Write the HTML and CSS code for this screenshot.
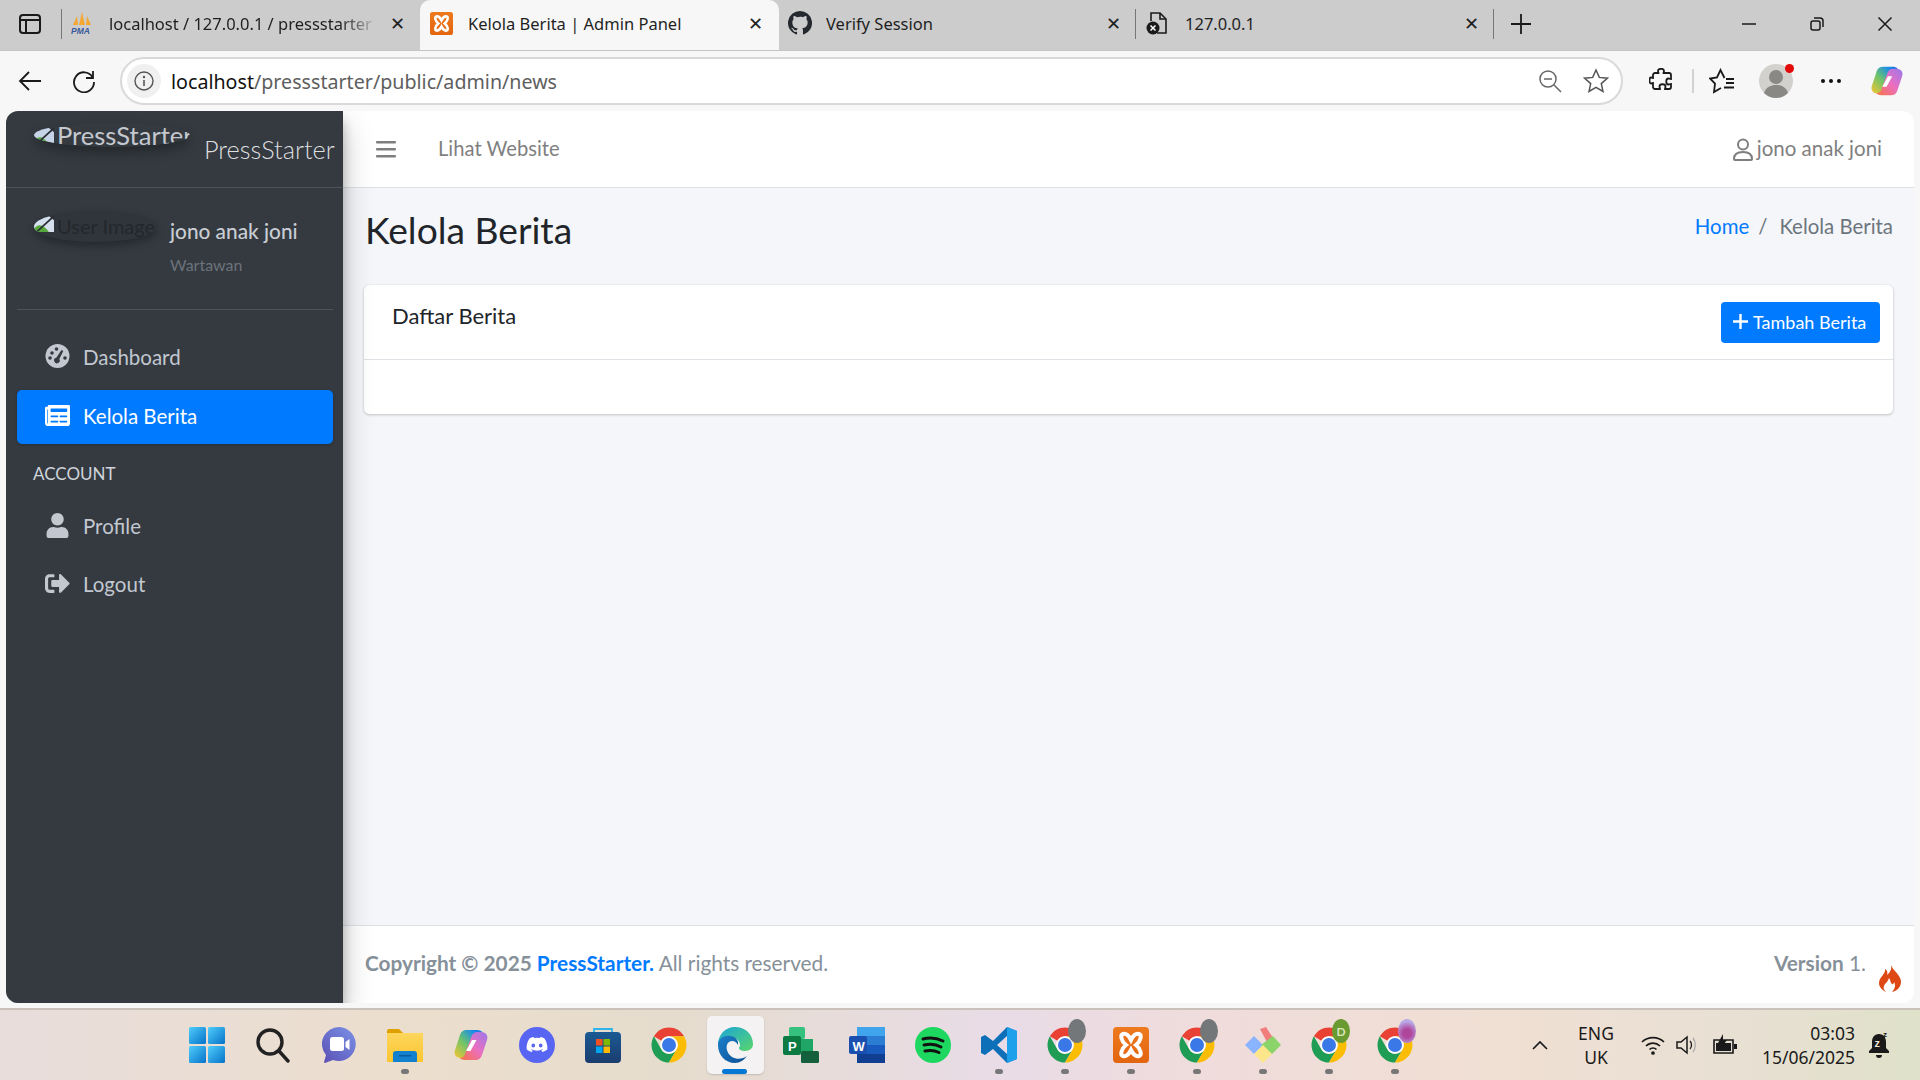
FILE: index.html
```html
<!DOCTYPE html>
<html lang="en">
<head>
    <meta charset="UTF-8">
    <meta name="viewport" content="width=device-width, initial-scale=1.0">
    <title>Kelola Berita | Admin Panel</title>
    <link rel="stylesheet" href="styles.css">
</head>
<body>
    <!-- shared icons -->
    <svg class="icon-defs" aria-hidden="true">
        <defs>
            <linearGradient id="gStart" x1="0" y1="0" x2="1" y2="1"><stop offset="0" stop-color="#4fcdfb"/><stop offset="1" stop-color="#0672c9"/></linearGradient>
            <linearGradient id="gMeet" x1="0" y1="1" x2="1" y2="0"><stop offset="0" stop-color="#5b4fb5"/><stop offset="1" stop-color="#7b93e6"/></linearGradient>
            <linearGradient id="gFolder" x1="0" y1="0" x2="0" y2="1"><stop offset="0" stop-color="#fdd65c"/><stop offset="1" stop-color="#fbc52f"/></linearGradient>
            <linearGradient id="gCopL" x1="0" y1="1" x2="1" y2="0"><stop offset="0" stop-color="#f7c62f"/><stop offset=".45" stop-color="#6cc36b"/><stop offset=".8" stop-color="#1b8fe8"/><stop offset="1" stop-color="#1667d8"/></linearGradient>
            <linearGradient id="gCopR" x1="0" y1="1" x2="1" y2="0"><stop offset="0" stop-color="#f6733d"/><stop offset=".5" stop-color="#ec6fc0"/><stop offset="1" stop-color="#9a78ea"/></linearGradient>
            <linearGradient id="gStore" x1="0" y1="0" x2="0" y2="1"><stop offset="0" stop-color="#1a5a93"/><stop offset="1" stop-color="#1b3d6e"/></linearGradient>
            <linearGradient id="gEdge" x1="0" y1="0" x2="1" y2="1"><stop offset="0" stop-color="#1aa5d8"/><stop offset="1" stop-color="#5ad66c"/></linearGradient>
            <linearGradient id="gEdgeB" x1="0" y1="0" x2="1" y2="1"><stop offset="0" stop-color="#1c7fc9"/><stop offset="1" stop-color="#0c4f94"/></linearGradient>
            <linearGradient id="gXampp" x1="0" y1="0" x2="0" y2="1"><stop offset="0" stop-color="#ee7a1f"/><stop offset="1" stop-color="#e2650f"/></linearGradient>

            <symbol id="chrome" viewBox="0 0 48 48">
                <path fill="#e94235" d="M6.7 14A20 20 0 0 1 41.3 14H24a10 10 0 0 0-8.66 5z"/>
                <path fill="#1f9d55" d="M6.7 14A20 20 0 0 0 24 44l8.66-15a10 10 0 0 1-17.32 0z"/>
                <path fill="#fbbc04" d="M41.3 14A20 20 0 0 1 24 44l8.66-15A10 10 0 0 0 24 14z"/>
                <circle cx="24" cy="24" r="10" fill="#fff"/>
                <circle cx="24" cy="24" r="8" fill="#3b78e7"/>
            </symbol>
            <symbol id="xampp" viewBox="0 0 36 36">
                <rect x="0" y="0" width="36" height="36" rx="4" fill="url(#gXampp)"/>
                <path fill="none" stroke="#fff" stroke-width="4" stroke-linecap="round" d="M10 7c4-1 6 2 8 6 2-4 4-7 8-6 3 1 2 7-3 11 5 4 6 10 3 11-4 1-6-2-8-6-2 4-4 7-8 6-3-1-2-7 3-11-5-4-6-10-3-11z"/>
            </symbol>
            <symbol id="copilot" viewBox="0 0 36 36">
                <path fill="url(#gCopL)" d="M14 3C10 3 8 5 7 8L2 23c-1.500 4 1 8 5.500 8h4c3 0 5-1.500 6-4.500L24 9c1-3 3-4 5.500-4-1.500-1.300-3.500-2-5.500-2z"/>
                <path fill="url(#gCopR)" d="M22 33c4 0 6-2 7-5l5-15c1.500-4-1-8-5.500-8h-4c-3 0-5 1.500-6 4.500L12 27c-1 3-3 4-5.500 4 1.500 1.300 3.500 2 5.500 2z"/>
                <path fill="#fff" d="M19 13h4.500L17.500 24H13z"/>
            </symbol>
        </defs>
    </svg>

    <div class="browser">
        <div class="tabstrip">
            <div class="tab-action">
                <svg width="22" height="20" viewBox="0 0 22 20" fill="none" stroke="#1a1a1a" stroke-width="2"><rect x="1" y="1" width="20" height="18" rx="3"/><path d="M1 6h20M7 6v13"/></svg>
            </div>
            <div class="tab-sep"></div>
            <div class="tab tab-first">
                <svg class="tab-icon" width="24" height="24" viewBox="0 0 24 24"><path fill="#f4a733" d="M12 1l3 13H9zM7 5l1 9H3zM17 5l4 9h-5z"/><text x="1" y="22.500" class="pma-text">PMA</text></svg>
                <span class="tab-title tab-title-fade">localhost / 127.0.0.1 / pressstarter</span>
                <span class="tab-close">&#x2715;</span>
            </div>
            <div class="tab tab-active">
                <svg class="tab-icon" width="23" height="23"><use href="#xampp"/></svg>
                <span class="tab-title">Kelola Berita | Admin Panel</span>
                <span class="tab-close">&#x2715;</span>
            </div>
            <div class="tab tab-third">
                <svg class="tab-icon" width="24" height="24" viewBox="0 0 16 16"><path fill="#24292f" d="M8 0a8 8 0 0 0-2.53 15.59c.4.07.55-.17.55-.38v-1.34c-2.23.48-2.7-1.07-2.7-1.07-.36-.93-.89-1.17-.89-1.17-.73-.5.05-.49.05-.49.8.06 1.23.82 1.23.82.71 1.23 1.87.87 2.33.66.07-.52.28-.87.5-1.07-1.77-.2-3.64-.89-3.64-3.95 0-.87.31-1.59.82-2.15-.08-.2-.36-1.01.08-2.11 0 0 .67-.22 2.2.82A7.600 7.600 0 0 1 8 3.870c.68 0 1.360.09 2 .27 1.530-1.040 2.200-.82 2.200-.82.440 1.100.160 1.910.080 2.110.510.56.820 1.270.820 2.150 0 3.070-1.870 3.750-3.650 3.950.290.25.540.73.540 1.480v2.200c0 .210.150.460.550.380A8 8 0 0 0 8 0z"/></svg>
                <span class="tab-title">Verify Session</span>
                <span class="tab-close">&#x2715;</span>
            </div>
            <div class="tab-sep"></div>
            <div class="tab tab-fourth">
                <svg class="tab-icon" width="22" height="24" viewBox="0 0 22 24" fill="none"><path stroke="#1a1a1a" stroke-width="1.600" d="M5 10V2h9l6 6v14H11"/><path stroke="#1a1a1a" stroke-width="1.600" d="M14 2v6h6"/><circle cx="7" cy="17" r="6.500" fill="#1a1a1a"/><path stroke="#fff" stroke-width="1.500" d="M4.500 14.500l5 5m0-5l-5 5"/></svg>
                <span class="tab-title">127.0.0.1</span>
                <span class="tab-close">&#x2715;</span>
            </div>
            <div class="tab-sep"></div>
            <div class="tab-new">
                <svg width="22" height="22" viewBox="0 0 22 22" stroke="#1a1a1a" stroke-width="1.800"><path d="M11 1v20M1 11h20"/></svg>
            </div>
            <div class="window-controls">
                <svg width="16" height="16" viewBox="0 0 16 16" stroke="#1a1a1a" stroke-width="1.500"><path d="M1 8h14"/></svg>
                <svg width="16" height="16" viewBox="0 0 16 16" fill="none" stroke="#1a1a1a" stroke-width="1.500"><rect x="2" y="5" width="9" height="9" rx="2"/><path d="M5 2h6a3 3 0 0 1 3 3v6"/></svg>
                <svg width="16" height="16" viewBox="0 0 16 16" stroke="#1a1a1a" stroke-width="1.500"><path d="M1.500 1.500l13 13m0-13l-13 13"/></svg>
            </div>
        </div>

        <div class="toolbar">
            <div class="tool-btn">
                <svg width="24" height="22" viewBox="0 0 24 22" fill="none" stroke="#1a1a1a" stroke-width="1.800"><path d="M23 11H2M11 2l-9 9 9 9"/></svg>
            </div>
            <div class="tool-btn">
                <svg width="24" height="24" viewBox="0 0 24 24" fill="none" stroke="#1a1a1a" stroke-width="1.800"><path d="M20.500 8A10 10 0 1 0 22 13"/><path d="M21 2v7h-7"/></svg>
            </div>
            <div class="address-bar">
                <div class="site-info">
                    <svg width="22" height="22" viewBox="0 0 22 22" fill="none" stroke="#555"><circle cx="11" cy="11" r="9" stroke-width="1.400"/><path d="M11 10v6" stroke-width="1.600"/><circle cx="11" cy="7" r=".6" stroke-width="1.200"/></svg>
                </div>
                <div class="url"><span class="url-host">localhost</span>/pressstarter/public/admin/news</div>
                <svg class="zoom-icon" width="24" height="24" viewBox="0 0 24 24" fill="none" stroke="#666" stroke-width="1.500"><circle cx="10" cy="10" r="8"/><path d="M16 16l7 7M6 10h8"/></svg>
                <svg class="star-icon" width="26" height="26" viewBox="0 0 26 26" fill="none" stroke="#555" stroke-width="1.500"><path d="M13 2l3.300 7.400 8 .8-6 5.400 1.700 7.900-7-4.100-7 4.100 1.700-7.900-6-5.400 8-.8z"/></svg>
            </div>
            <svg class="tool-puzzle" width="24" height="26" viewBox="0 0 24 26" fill="none" stroke="#1a1a1a" stroke-width="1.800"><path d="M9 3c0-3 6-3 6 0 0 1-.5 1.500-.5 2H20a2 2 0 0 1 2 2v4c-1 0-1.500-.5-2.500-.5-3 0-3 6 0 6 1 0 1.500-.5 2.500-.5v3a2 2 0 0 1-2 2h-4c0-1 .5-1.500.5-2.500 0-3-6-3-6 0 0 1 .5 1.500.5 2.500H6a2 2 0 0 1-2-2v-4c-1 0-1.500.5-2 .5-2 0-2-6 0-6 .5 0 1 .5 2 .5V7a2 2 0 0 1 2-2h3.500C9.500 4.500 9 4 9 3z"/></svg>
            <div class="tool-sep"></div>
            <svg class="tool-fav" width="26" height="26" viewBox="0 0 26 26" fill="none" stroke="#1a1a1a" stroke-width="1.800"><path d="M15.500 10L11.500 2 8 9.500 1 10.500l5 5L5 24l7-4"/><path d="M17 11h8M17 15h8M15 19.500h10"/></svg>
            <div class="profile">
                <svg width="34" height="34" viewBox="0 0 34 34"><circle cx="17" cy="17" r="17" fill="#d2d1cd"/><circle cx="17" cy="13" r="7" fill="#8a8885"/><path fill="#8a8885" d="M5 29c2-6 7-8 12-8s10 2 12 8a17 17 0 0 1-24 0z"/></svg>
                <span class="profile-dot"></span>
            </div>
            <div class="tool-dots"><i></i><i></i><i></i></div>
            <svg class="tool-copilot" width="34" height="36"><use href="#copilot"/></svg>
        </div>

        <div class="viewport">
            <div class="app">
                <aside class="sidebar">
                    <div class="brand">
                        <div class="brand-img">
                            <svg class="broken-img" width="20" height="17" viewBox="0 0 16 16" preserveAspectRatio="none"><path fill="#c7d4e8" d="M0 0h11l5 5v11H0z"/><path fill="#57a83c" d="M0 13c3-5 7-5 12 3H0z"/><path stroke="#2a2e33" stroke-width="1.500" d="M16 1L2 16"/></svg>
                            <span>PressStarter</span>
                        </div>
                        <span class="brand-text">PressStarter</span>
                    </div>
                    <div class="user-panel">
                        <div class="user-img">
                            <svg class="broken-img" width="20" height="17" viewBox="0 0 16 16" preserveAspectRatio="none"><path fill="#d5dfee" d="M0 0h11l5 5v11H0z"/><path fill="#57a83c" d="M0 13c3-5 7-5 12 3H0z"/><path stroke="#2a2e33" stroke-width="1.500" d="M16 1L2 16"/></svg>
                            <span>User Image</span>
                        </div>
                        <div class="user-info">
                            <div class="user-name">jono anak joni</div>
                            <div class="user-role">Wartawan</div>
                        </div>
                    </div>
                    <nav class="nav">
                        <a class="nav-link">
                            <svg class="nav-icon" width="24" height="24" viewBox="0 0 24 24"><circle cx="12" cy="12" r="12" fill="currentColor"/><g fill="#343a40"><circle cx="6.500" cy="9" r="1.800"/><circle cx="11" cy="5" r="1.800"/><circle cx="4.500" cy="14" r="1.800"/><circle cx="19.500" cy="14" r="1.800"/><path d="M16 6l1.800 1-4 8a2.800 2.800 0 1 1-3-1.300z"/></g></svg>
                            <span>Dashboard</span>
                        </a>
                        <a class="nav-link nav-active">
                            <svg class="nav-icon" width="25" height="21" viewBox="0 64 576 384" preserveAspectRatio="none"><path fill="currentColor" d="M552 64H88c-13.255 0-24 10.745-24 24v8H24c-13.255 0-24 10.745-24 24v272c0 30.928 25.072 56 56 56h472c26.510 0 48-21.490 48-48V88c0-13.255-10.745-24-24-24zM56 400a8 8 0 0 1-8-8V144h16v248a8 8 0 0 1-8 8zm236-16H140c-6.627 0-12-5.373-12-12v-8c0-6.627 5.373-12 12-12h152c6.627 0 12 5.373 12 12v8c0 6.627-5.373 12-12 12zm208 0H348c-6.627 0-12-5.373-12-12v-8c0-6.627 5.373-12 12-12h152c6.627 0 12 5.373 12 12v8c0 6.627-5.373 12-12 12zm-208-96H140c-6.627 0-12-5.373-12-12v-8c0-6.627 5.373-12 12-12h152c6.627 0 12 5.373 12 12v8c0 6.627-5.373 12-12 12zm208 0H348c-6.627 0-12-5.373-12-12v-8c0-6.627 5.373-12 12-12h152c6.627 0 12 5.373 12 12v8c0 6.627-5.373 12-12 12zm0-96H140c-6.627 0-12-5.373-12-12v-40c0-6.627 5.373-12 12-12h360c6.627 0 12 5.373 12 12v40c0 6.627-5.373 12-12 12z"/></svg>
                            <span>Kelola Berita</span>
                        </a>
                        <div class="nav-header">ACCOUNT</div>
                        <a class="nav-link">
                            <svg class="nav-icon" width="22" height="25" viewBox="0 0 448 512"><path fill="currentColor" d="M224 256c70.700 0 128-57.300 128-128S294.700 0 224 0 96 57.300 96 128s57.300 128 128 128zm89.600 32h-16.700c-22.200 10.200-46.900 16-72.900 16s-50.600-5.800-72.900-16h-16.700C60.200 288 0 348.200 0 422.400V464c0 26.500 21.500 48 48 48h352c26.500 0 48-21.500 48-48v-41.600c0-74.200-60.200-134.400-134.400-134.400z"/></svg>
                            <span>Profile</span>
                        </a>
                        <a class="nav-link">
                            <svg class="nav-icon" width="25" height="25" viewBox="0 0 512 512"><path fill="currentColor" d="M497 273L329 441c-15 15-41 4.500-41-17v-96H152c-13.300 0-24-10.700-24-24v-96c0-13.300 10.700-24 24-24h136V88c0-21.400 25.900-32 41-17l168 168c9.300 9.400 9.300 24.600 0 34zM192 436v-40c0-6.600-5.400-12-12-12H96c-17.700 0-32-14.300-32-32V160c0-17.700 14.300-32 32-32h84c6.600 0 12-5.400 12-12V76c0-6.600-5.400-12-12-12H96c-53 0-96 43-96 96v192c0 53 43 96 96 96h84c6.600 0 12-5.400 12-12z"/></svg>
                            <span>Logout</span>
                        </a>
                    </nav>
                </aside>

                <div class="main">
                    <header class="topnav">
                        <svg class="hamburger" width="20" height="17" viewBox="0 0 20 17" fill="#7f7f7f"><rect width="20" height="2.500" rx="1"/><rect y="7" width="20" height="2.500" rx="1"/><rect y="14" width="20" height="2.500" rx="1"/></svg>
                        <a class="topnav-link">Lihat Website</a>
                        <div class="topnav-user">
                            <svg width="20" height="23" viewBox="0 0 20 23" fill="none" stroke="#7f7f7f" stroke-width="2"><circle cx="10" cy="6.500" r="5"/><path d="M1 21c0-5 4-7 9-7s9 2 9 7c0 .600-.400 1-1 1H2c-.600 0-1-.400-1-1z"/></svg>
                            <span>jono anak joni</span>
                        </div>
                    </header>

                    <main class="content">
                        <div class="content-header">
                            <h1>Kelola Berita</h1>
                            <ol class="breadcrumb">
                                <li><a>Home</a></li>
                                <li class="crumb-sep">/</li>
                                <li>Kelola Berita</li>
                            </ol>
                        </div>
                        <section class="card">
                            <div class="card-header">
                                <h3>Daftar Berita</h3>
                                <a class="btn-primary">
                                    <svg width="17" height="17" viewBox="0 0 17 17" stroke="#fff" stroke-width="2.400"><path d="M8.500 1v15M1 8.500h15"/></svg>
                                    Tambah Berita
                                </a>
                            </div>
                            <div class="card-body"></div>
                        </section>
                    </main>

                    <footer class="footer">
                        <div><b>Copyright &copy; 2025 <a>PressStarter.</a></b> All rights reserved.</div>
                        <div><b>Version</b> 1.0.0</div>
                    </footer>
                </div>

                <div class="debug-flame">
                    <svg width="22" height="27" viewBox="0 0 22 27"><path fill="#dd4814" d="M12 0c1 5-1 7-4 10C9 7 8 5 6 4c1 5-6 8-6 14 0 4 3 7 7 9-2-2-3-4-2-6 1-3 4-4 5-8 2 3 1 4 3 6 1 1 2-1 2-2 2 3 1 7-2 10 5-1 9-5 9-10 0-7-7-10-10-17z"/></svg>
                </div>
            </div>
        </div>

        <div class="taskbar">
            <div class="task-icons">
                <div class="task-item">
                    <svg width="36" height="36" viewBox="0 0 36 36" fill="url(#gStart)"><rect width="17" height="17" rx="1.500"/><rect x="19" width="17" height="17" rx="1.500"/><rect y="19" width="17" height="17" rx="1.500"/><rect x="19" y="19" width="17" height="17" rx="1.500"/></svg>
                </div>
                <div class="task-item">
                    <svg width="34" height="35" viewBox="0 0 34 35" fill="none" stroke="#222" stroke-width="3.400" stroke-linecap="round"><circle cx="14" cy="14" r="12"/><path d="M23 23l9 10"/></svg>
                </div>
                <div class="task-item">
                    <svg width="34" height="36" viewBox="0 0 34 36"><path fill="url(#gMeet)" d="M17 0a17 17 0 1 1-6 33l-8 3c-1 0-1-1-1-1l2-7A17 17 0 0 1 17 0z"/><rect x="8" y="10" width="14" height="14" rx="2.500" fill="#fff"/><path fill="#fff" d="M23.500 15l4-3v11l-4-3z"/></svg>
                </div>
                <div class="task-item has-dot">
                    <svg width="36" height="33" viewBox="0 0 36 33"><path fill="#dea000" d="M0 2a2 2 0 0 1 2-2h10l4 4h20v6H0z"/><path fill="url(#gFolder)" d="M0 4h36v29H0z"/><path fill="#1180cf" d="M6 33V25a3 3 0 0 1 3-3h18a3 3 0 0 1 3 3v8z"/><rect x="12" y="26" width="12" height="1.500" fill="#0b5a99"/></svg>
                </div>
                <div class="task-item"><svg width="36" height="38"><use href="#copilot"/></svg></div>
                <div class="task-item">
                    <svg width="36" height="36" viewBox="0 0 36 36"><circle cx="18" cy="18" r="18" fill="#5865f2"/><path fill="#fff" d="M25.500 11.500A17 17 0 0 0 21.500 10l-.6 1.100a15 15 0 0 0-5.800 0L14.500 10a17 17 0 0 0-4 1.500C8 15.300 7.300 19 7.700 22.600a17 17 0 0 0 5 2.500l1-1.700-1.700-.8.400-.3a12 12 0 0 0 11.200 0l.4.300-1.700.8 1 1.700a17 17 0 0 0 5-2.500c.5-4.200-.8-7.800-2.800-11.100zM14.300 20.400c-1 0-1.800-.9-1.800-2s.8-2 1.800-2 1.800.9 1.800 2-.8 2-1.800 2zm7.400 0c-1 0-1.800-.9-1.800-2s.8-2 1.800-2 1.800.9 1.800 2-.8 2-1.800 2z"/></svg>
                </div>
                <div class="task-item">
                    <svg width="36" height="36" viewBox="0 0 36 36"><path fill="none" stroke="#2fb5e8" stroke-width="1.800" d="M9 8V2h18v6"/><rect y="5" width="36" height="31" rx="4" fill="url(#gStore)"/><rect x="11" y="12" width="6.500" height="6.500" fill="#f25022"/><rect x="18.500" y="12" width="6.500" height="6.500" fill="#7fba00"/><rect x="11" y="19.500" width="6.500" height="6.500" fill="#00a4ef"/><rect x="18.500" y="19.500" width="6.500" height="6.500" fill="#ffb900"/></svg>
                </div>
                <div class="task-item"><svg width="42" height="42"><use href="#chrome"/></svg></div>
                <div class="task-item task-current">
                    <svg width="36" height="36" viewBox="0 0 36 36"><path fill="url(#gEdge)" d="M18 0c10 0 18 7 18 17 0 4-3 7-8 7-3 0-6-1-6-3 0-1 1-1 1-3 0-4-4-8-9-8C8 10 3 13 1 18 1 8 8 0 18 0z"/><path fill="url(#gEdgeB)" d="M1 18C1 12 7 8 13 9c5 0 9 4 8 9-2-4-6-5-9-3-4 3-3 11 3 15 5 3 11 2 15-1-3 4-7 7-12 7C8 36 1 28 1 18z"/></svg>
                    <span class="task-bar"></span>
                </div>
                <div class="task-item">
                    <svg width="36" height="36" viewBox="0 0 36 36"><rect x="6" width="16" height="12" rx="2" fill="#35c27e"/><rect x="14" y="12" width="16" height="13" fill="#1fa565"/><rect x="18" y="24" width="18" height="12" rx="1.500" fill="#14603c"/><rect y="9" width="18" height="19" rx="2" fill="#0c7a43"/><text x="5" y="23.500" class="task-letter">P</text></svg>
                </div>
                <div class="task-item">
                    <svg width="36" height="36" viewBox="0 0 36 36"><rect x="8" width="28" height="36" rx="2" fill="#2b7cd3"/><rect x="8" width="28" height="9" fill="#41a5ee"/><rect x="8" y="18" width="28" height="9" fill="#185abd"/><rect x="8" y="27" width="28" height="9" fill="#103f91"/><rect y="9" width="18" height="18" rx="2" fill="#1a4fb0"/><text x="3.500" y="23.500" class="task-letter">W</text></svg>
                </div>
                <div class="task-item">
                    <svg width="36" height="36" viewBox="0 0 36 36"><circle cx="18" cy="18" r="18" fill="#1ed760"/><path fill="none" stroke="#111" stroke-width="3" stroke-linecap="round" d="M8 12c7-2 14-1 20 2M9 18c6-1.500 12-1 17 2M10 24c5-1 10-.5 14 1.500"/></svg>
                </div>
                <div class="task-item has-dot">
                    <svg width="36" height="36" viewBox="0 0 36 36"><path fill="#0d6fb8" d="M26 0L12 14 4 8 0 10v16l4 2 8-6 14 14 10-4V4zM26 9v18l-10-9z" fill-rule="evenodd"/><path fill="#1fa0ea" d="M26 0l10 4v28l-10 4z"/></svg>
                </div>
                <div class="task-item has-dot">
                    <svg width="42" height="42"><use href="#chrome"/></svg>
                    <span class="bubble bubble-grey"></span>
                </div>
                <div class="task-item has-dot"><svg width="36" height="36"><use href="#xampp"/></svg></div>
                <div class="task-item has-dot">
                    <svg width="42" height="42"><use href="#chrome"/></svg>
                    <span class="bubble bubble-grey"></span>
                </div>
                <div class="task-item has-dot">
                    <svg width="36" height="36" viewBox="0 0 36 36"><path fill="#f27d7d" d="M15 2l6-2 7 11-6 4z"/><path fill="#8ab4ff" d="M0 18l9-9 9 9-9 9z"/><path fill="#8ad46a" d="M20 24l-4-6 12-9 8 9-9 9z"/><path fill="#fce58a" d="M9 27l9-9 9 9-9 9z"/></svg>
                </div>
                <div class="task-item has-dot">
                    <svg width="42" height="42"><use href="#chrome"/></svg>
                    <span class="bubble bubble-green">D</span>
                </div>
                <div class="task-item has-dot">
                    <svg width="42" height="42"><use href="#chrome"/></svg>
                    <span class="bubble bubble-purple"></span>
                </div>
            </div>

            <div class="tray">
                <svg class="tray-chevron" width="16" height="9" viewBox="0 0 16 9" fill="none" stroke="#1a1a1a" stroke-width="1.700"><path d="M1 8l7-7 7 7"/></svg>
                <div class="tray-lang"><div>ENG</div><div>UK</div></div>
                <svg class="tray-wifi" width="24" height="20" viewBox="0 0 24 20" fill="none" stroke="#1a1a1a" stroke-width="1.700"><path d="M1 7a16 16 0 0 1 22 0M5 11a10 10 0 0 1 14 0M8.500 14.500a5 5 0 0 1 7 0"/><circle cx="12" cy="18" r="1" fill="#1a1a1a"/></svg>
                <svg class="tray-sound" width="24" height="22" viewBox="0 0 24 22" fill="none"><path stroke="#1a1a1a" stroke-width="1.500" d="M1 8v6h4l6 5V3L5 8z"/><path stroke="#1a1a1a" stroke-width="1.300" d="M14 7c2 2 2 6 0 8"/><path stroke="#aaa" stroke-width="1.300" d="M17 4c3 4 3 10 0 14"/></svg>
                <svg class="tray-battery" width="26" height="22" viewBox="0 0 26 22"><path fill="none" stroke="#1a1a1a" stroke-width="1.600" d="M2 6h19v13H2z"/><rect x="4" y="9" width="15" height="8" fill="#1a1a1a"/><rect x="22" y="10" width="3" height="5" fill="#1a1a1a"/><path fill="#1a1a1a" d="M11 0L6 9h4l-1 5 6-8h-4z"/></svg>
                <div class="tray-clock"><div>03:03</div><div>15/06/2025</div></div>
                <svg class="tray-bell" width="22" height="30" viewBox="0 0 22 30"><path fill="#1a1a1a" d="M11 4c-5 0-7 4-7 8v6l-3 3v2h20v-2l-3-3v-6c0-4-2-8-7-8zM8 25a3 3 0 0 0 6 0z"/><text x="6.500" y="17" class="bell-z">z</text><text x="15" y="7" class="bell-z-small">z</text></svg>
            </div>
        </div>
    </div>
</body>
</html>
```
FILE: styles.css
```css
* {
    box-sizing: border-box;
}
html, body {
    height: 100%;
}
body {
    margin: 0;
    font-family: Lato, "Noto Sans", sans-serif;
    overflow: hidden;
}
a {
    color: #007bff;
    text-decoration: none;
}
.icon-defs {
    position: absolute;
    width: 0;
    height: 0;
}
.browser {
    display: flex;
    flex-direction: column;
    height: 1080px;
    background: #f7f7f7;
}

/* tab strip */
.tabstrip {
    display: flex;
    align-items: center;
    height: 50px;
    background: #cccccc;
    font-family: "Noto Sans", sans-serif;
    font-size: 16.500px;
    color: #1f1f1f;
    flex-shrink: 0;
}
.tab-action {
    display: flex;
    justify-content: center;
    width: 52px;
    margin: 0 1px 3px 8px;
    padding-right: 8px;
}
.tab-sep {
    width: 1px;
    height: 30px;
    margin-bottom: 3px;
    background: #777;
    flex-shrink: 0;
}
.tab {
    display: flex;
    align-items: center;
    height: 50px;
    width: 357px;
    padding: 0 13px 4px 8px;
    flex-shrink: 0;
}
.tab-icon {
    flex-shrink: 0;
    margin-right: 15px;
}
.tab-title {
    flex: 1;
    white-space: nowrap;
    overflow: hidden;
}
.tab-title-fade {
    -webkit-mask-image: linear-gradient(to right, #000 85%, transparent 100%);
    mask-image: linear-gradient(to right, #000 85%, transparent 100%);
}
.tab-close {
    width: 18px;
    text-align: center;
    font-size: 18px;
    margin-left: 8px;
}
.tab-active {
    width: 359px;
    margin-left: 1px;
    padding-left: 10px;
    padding-right: 15px;
    background: #f7f7f7;
    border-radius: 10px 10px 0 0;
}
.tab-third {
    width: 356px;
    padding-left: 9px;
    padding-right: 13px;
}
.tab-third .tab-icon {
    margin-right: 14px;
}
.tab-fourth {
    padding-left: 10px;
    padding-right: 13px;
}
.tab-fourth .tab-icon {
    margin-right: 17px;
}
.tab-new {
    display: flex;
    margin: 0 0 3px 16px;
}
.window-controls {
    display: flex;
    margin: 0 0 3px auto;
    gap: 52px;
    padding-right: 27px;
}

/* address row */
.toolbar {
    display: flex;
    align-items: center;
    height: 61px;
    padding-left: 3px;
    background: #f7f7f7;
    border-top: 1px solid #c4c4c4;
    flex-shrink: 0;
}
.tool-btn {
    display: flex;
    justify-content: center;
    width: 54px;
}
.address-bar {
    display: flex;
    align-items: center;
    width: 1503px;
    height: 48px;
    margin-left: 9px;
    padding: 0 12px 0 6px;
    background: #fff;
    border: 2px solid #d9d9d9;
    border-radius: 24px;
}
.site-info {
    display: flex;
    align-items: center;
    justify-content: center;
    width: 34px;
    height: 34px;
    border-radius: 50%;
    background: #f0f0f0;
    margin-left: -1px;
}
.url {
    flex: 1;
    padding-left: 10px;
    font-family: "Noto Sans", sans-serif;
    font-size: 19.650px;
    color: #5e5e5e;
}
.url-host {
    color: #111;
}
.zoom-icon {
    margin-right: 21px;
}
.tool-puzzle {
    margin-left: 26px;
}
.tool-sep {
    width: 2px;
    height: 24px;
    margin-left: 19px;
    background: #d2d2d2;
}
.tool-fav {
    margin-left: 15px;
}
.profile {
    position: relative;
    display: flex;
    margin-left: 24px;
}
.profile-dot {
    position: absolute;
    top: 0;
    right: -1px;
    width: 9px;
    height: 9px;
    border-radius: 50%;
    background: #e40a0a;
}
.tool-dots {
    display: flex;
    gap: 4px;
    margin-left: 28px;
}
.tool-dots i {
    width: 4px;
    height: 4px;
    border-radius: 50%;
    background: #111;
}
.tool-copilot {
    margin-left: 29px;
}

/* page area */
.viewport {
    flex: 1;
    min-height: 0;
    padding: 0 6px 5px;
}
.app {
    position: relative;
    display: flex;
    height: 100%;
    border-radius: 12px;
    overflow: hidden;
    background: #f4f6f9;
}
.sidebar {
    position: relative;
    z-index: 2;
    width: 337px;
    flex-shrink: 0;
    background: #343a40;
    box-shadow: 0 14px 28px rgba(0,0,0,.25), 0 10px 10px rgba(0,0,0,.22);
}
.brand {
    display: flex;
    height: 77px;
    padding-left: 28px;
    border-bottom: 1px solid #4b545c;
}
.brand-img {
    display: flex;
    align-items: flex-start;
    width: 156px;
    height: 24px;
    margin-top: 12px;
    border-radius: 50%;
    overflow: hidden;
    box-shadow: 0 6px 12px rgba(0,0,0,.3);
    font-size: 25.500px;
    line-height: 24px;
    color: #c5c9cf;
    white-space: nowrap;
}
.broken-img {
    flex-shrink: 0;
    margin-top: 4px;
    margin-right: 3px;
}
.brand-text {
    margin-left: 14px;
    margin-top: 23px;
    font-size: 25.300px;
    font-weight: 300;
    line-height: 30px;
    color: rgba(255,255,255,.85);
}
.user-panel {
    display: flex;
    height: 122px;
    margin: 0 10px 0 11px;
    padding-left: 17px;
    border-bottom: 1px solid #4b545c;
}
.user-img {
    display: flex;
    align-items: flex-start;
    width: 123px;
    height: 31px;
    margin-top: 23px;
    border-radius: 50%;
    overflow: hidden;
    background: #30353b;
    box-shadow: 0 4px 8px rgba(0,0,0,.3);
    font-size: 20px;
    line-height: 30px;
    color: #23272b;
    white-space: nowrap;
}
.user-info {
    margin-left: 13px;
    padding-top: 28px;
}
.user-name {
    font-size: 20.800px;
    line-height: 30px;
    font-weight: 500;
    color: #c9cdd4;
}
.user-role {
    margin-top: 9px;
    font-size: 16px;
    line-height: 20px;
    color: #6c737b;
}
.nav {
    display: flex;
    flex-direction: column;
    padding: 24px 10px 0 11px;
}
.nav-link {
    display: flex;
    align-items: center;
    height: 54px;
    padding: 0 0 2px 28px;
    margin-bottom: 4px;
    border-radius: 5px;
    font-size: 20.500px;
    color: #c2c7d0;
}
.nav-link:first-child {
    height: 46px;
    padding-bottom: 0;
    margin-bottom: 10px;
}
.nav-icon {
    width: 25px;
    margin-right: 13px;
    margin-bottom: 2px;
    flex-shrink: 0;
}
.nav-active {
    background: #007bff;
    color: #fff;
    box-shadow: 0 1px 3px rgba(0,0,0,.2);
    margin-bottom: 0;
}
.nav-header {
    height: 56px;
    padding: 19px 0 0 16px;
    font-size: 17px;
    line-height: 22px;
    color: #d0d4db;
}
.main {
    flex: 1;
    display: flex;
    flex-direction: column;
    min-width: 0;
}
.topnav {
    display: flex;
    align-items: center;
    height: 77px;
    padding: 0 32px 0 33px;
    background: #fff;
    border-bottom: 1px solid #dee2e6;
    font-size: 20.500px;
    color: #7f7f7f;
    flex-shrink: 0;
}
.topnav-link {
    margin: 0 0 2px 42px;
    font-size: 20.200px;
    color: #7f7f7f;
}
.topnav-user {
    display: flex;
    align-items: center;
    gap: 4px;
    margin-left: auto;
}
.topnav-user span {
    margin-bottom: 2px;
}
.content {
    flex: 1;
    padding: 0 21px;
}
.content-header {
    display: flex;
    justify-content: space-between;
    height: 97px;
    padding-top: 20px;
}
h1 {
    margin: 0 0 0 1px;
    font-size: 37.200px;
    line-height: 43px;
    font-weight: 400;
    color: #212529;
}
.breadcrumb {
    display: flex;
    gap: 12px;
    margin: 0;
    padding: 3px 0 0;
    list-style: none;
    font-size: 20.400px;
    line-height: 30px;
    color: #6c757d;
}
.crumb-sep {
    margin-left: -3px;
}
.card {
    background: #fff;
    border-radius: 5px;
    box-shadow: 0 0 1px rgba(0,0,0,.125), 0 1px 3px rgba(0,0,0,.2);
}
.card-header {
    display: flex;
    justify-content: space-between;
    height: 75px;
    padding: 17px 13px 0 28px;
    border-bottom: 1px solid #dee2e6;
}
h3 {
    margin: 0;
    font-size: 22px;
    line-height: 28px;
    font-weight: 400;
    color: #212529;
}
.btn-primary {
    display: flex;
    align-items: center;
    gap: 4px;
    width: 159px;
    height: 41px;
    padding: 0 0 2px 11px;
    background: #007bff;
    border-radius: 4px;
    color: #fff;
    font-size: 18px;
}
.card-body {
    height: 54px;
}
.footer {
    display: flex;
    justify-content: space-between;
    align-items: center;
    height: 78px;
    padding: 0 19px 5px 22px;
    background: #fff;
    border-top: 1px solid #dee2e6;
    font-size: 20.800px;
    color: #869099;
    flex-shrink: 0;
}
.debug-flame {
    position: absolute;
    right: 0;
    bottom: 0;
    display: flex;
    align-items: center;
    justify-content: center;
    width: 49px;
    height: 50px;
    background: #fff;
    z-index: 3;
}

/* windows taskbar */
.taskbar {
    display: flex;
    align-items: center;
    height: 72px;
    border-top: 2px solid #c9c1ba;
    background: linear-gradient(to right, #e8dddb 0%, #ecdecd 22%, #e5dccd 35%, #e9dce7 52%, #efdcdc 62%, #f0dfd3 78%, #e9e0d4 90%, #dfe1c9 100%);
    flex-shrink: 0;
}
.task-icons {
    display: flex;
    padding-left: 174px;
}
.task-item {
    position: relative;
    display: flex;
    align-items: center;
    justify-content: center;
    width: 66px;
    height: 70px;
}
.has-dot::after {
    content: "";
    position: absolute;
    left: 29px;
    bottom: 6px;
    width: 8px;
    height: 5px;
    border-radius: 3px;
    background: #777;
}
.task-current::before {
    content: "";
    position: absolute;
    left: 5px;
    right: 4px;
    top: 6px;
    bottom: 6px;
    background: #f4f2f2;
    border-radius: 5px;
    box-shadow: 0 1px 2px rgba(0,0,0,.15);
}
.task-current svg {
    position: relative;
}
.task-bar {
    position: absolute;
    left: 20px;
    bottom: 6px;
    width: 25px;
    height: 5px;
    border-radius: 3px;
    background: #0078d4;
}
.task-letter {
    font-family: "Liberation Sans", sans-serif;
    font-size: 13px;
    font-weight: 700;
    fill: #fff;
}
.pma-text {
    font-family: "Liberation Sans", sans-serif;
    font-size: 8.500px;
    font-weight: 700;
    font-style: italic;
    fill: #3a5a9b;
}
.bubble {
    position: absolute;
    left: 36px;
    top: 9px;
    display: flex;
    align-items: center;
    justify-content: center;
    width: 18px;
    height: 24px;
    border-radius: 50%;
    font-size: 12px;
    font-weight: 700;
    color: #d8e6b8;
}
.bubble-grey {
    background: #73777a;
}
.bubble-green {
    background: #6a9a32;
}
.bubble-purple {
    background: radial-gradient(circle at 50% 60%, #b0459c 25%, #b9a9e6 70%);
}
.tray {
    display: flex;
    align-items: center;
    height: 70px;
    font-family: "Noto Sans", sans-serif;
    font-size: 17.500px;
    line-height: 24px;
    color: #1a1a1a;
}
.tray-chevron {
    margin-left: 104px;
}
.tray-lang {
    margin-left: 23px;
    width: 50px;
    text-align: center;
}
.tray-wifi {
    margin-left: 20px;
}
.tray-sound {
    margin-left: 11px;
}
.tray-battery {
    margin-left: 12px;
}
.tray-clock {
    width: 100px;
    margin-left: 17px;
    text-align: right;
    line-height: 24px;
}
.tray-bell {
    margin-left: 13px;
}
.bell-z {
    font-family: "Liberation Sans", sans-serif;
    font-size: 11px;
    font-weight: 700;
    fill: #f2e8d8;
}
.bell-z-small {
    font-family: "Liberation Sans", sans-serif;
    font-size: 8px;
    font-weight: 700;
    fill: #1a1a1a;
}
```
